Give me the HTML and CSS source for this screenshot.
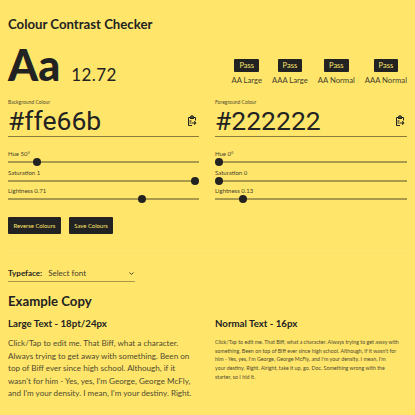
FILE: index.html
```html
<!DOCTYPE html>
<html lang="en">
<head>
  <meta charset="UTF-8"/>
  <meta name="viewport" content="width=device-width,initial-scale=1.0"/>
  <title>Colour Contrast Checker</title>
  <link rel="stylesheet" href="styles.css">
</head>
<body>

<h1>Colour Contrast Checker</h1>

<div class="columns results">
  <div class="score">
    <span class="sample">Aa</span>
    <span class="ratio">12.72</span>
  </div>
  <div class="grades">
    <div class="grade"><span class="badge">Pass</span><span class="grade-label">AA Large</span></div>
    <div class="grade"><span class="badge">Pass</span><span class="grade-label">AAA Large</span></div>
    <div class="grade"><span class="badge">Pass</span><span class="grade-label">AA Normal</span></div>
    <div class="grade"><span class="badge">Pass</span><span class="grade-label">AAA Normal</span></div>
  </div>
</div>

<div class="columns pickers">
  <div class="picker">
    <label class="field-label">Background Colour</label>
    <div class="hex-row">
      <span class="hex">#ffe66b</span>
      <svg class="paste" viewBox="0 0 24 24"><path d="M8 4H5.500A1.500 1.500 0 0 0 4 5.500v15A1.500 1.500 0 0 0 5.500 22H12v-2H6V6h2v2h8V6h2v5h2V5.500A1.500 1.500 0 0 0 18.500 4H16a4 3.500 0 0 0-8 0zm4-1a1 1 0 1 1 0 2 1 1 0 0 1 0-2z"/><path d="M17 12l-1.400 1.400 1.600 1.600H12v2h5.200l-1.600 1.600L17 20l4-4z"/><path d="M7 10h4v8H7z" opacity=".55"/></svg>
    </div>
    <label class="slider-label">Hue 50°</label>
    <input type="range" min="0" max="360" value="50">
    <label class="slider-label">Saturation 1</label>
    <input type="range" min="0" max="1" step="0.01" value="1">
    <label class="slider-label">Lightness 0.71</label>
    <input type="range" min="0" max="1" step="0.01" value="0.71">
    <div class="actions">
      <button>Reverse Colours</button>
      <button>Save Colours</button>
    </div>
  </div>
  <div class="picker">
    <label class="field-label">Foreground Colour</label>
    <div class="hex-row">
      <span class="hex">#222222</span>
      <svg class="paste" viewBox="0 0 24 24"><path d="M8 4H5.500A1.500 1.500 0 0 0 4 5.500v15A1.500 1.500 0 0 0 5.500 22H12v-2H6V6h2v2h8V6h2v5h2V5.500A1.500 1.500 0 0 0 18.500 4H16a4 3.500 0 0 0-8 0zm4-1a1 1 0 1 1 0 2 1 1 0 0 1 0-2z"/><path d="M17 12l-1.400 1.400 1.600 1.600H12v2h5.200l-1.600 1.600L17 20l4-4z"/><path d="M7 10h4v8H7z" opacity=".55"/></svg>
    </div>
    <label class="slider-label">Hue 0°</label>
    <input type="range" min="0" max="360" value="0">
    <label class="slider-label">Saturation 0</label>
    <input type="range" min="0" max="1" step="0.01" value="0">
    <label class="slider-label">Lightness 0.13</label>
    <input type="range" min="0" max="1" step="0.01" value="0.13">
  </div>
</div>

<div class="typeface">
  <strong>Typeface:</strong>
  <span class="select-font">Select font
    <svg class="chevron" viewBox="0 0 10 6"><path d="M1 1l4 4 4-4"/></svg>
  </span>
</div>

<h2>Example Copy</h2>

<div class="columns copy">
  <div>
    <h3>Large Text - 18pt/24px</h3>
    <p class="large">Click/Tap to edit me. That Biff, what a character. Always trying to get away with something. Been on top of Biff ever since high school. Although, if it wasn't for him - Yes, yes, I'm George, George McFly, and I'm your density. I mean, I'm your destiny. Right.</p>
  </div>
  <div>
    <h3>Normal Text - 16px</h3>
    <p class="normal">Click/Tap to edit me. That Biff, what a character. Always trying to get away with something. Been on top of Biff ever since high school. Although, if it wasn't for him - Yes, yes, I'm George, George McFly, and I'm your density. I mean, I'm<br>your destiny. Right. Alright, take it up, go. Doc. Something wrong with the<br>starter, so I hid it.</p>
  </div>
</div>

</body>
</html>
```

FILE: styles.css
```css
html { overflow: hidden; }
body {
  font-family: Lato, "Open Sans", sans-serif;
  background: #ffe66b;
  color: #222222;
  margin: 0;
  padding: 0 8px;
  height: 415px;
  overflow: hidden;
}
h1 {
  font-size: 13.200px;
  font-weight: 700;
  line-height: 18px;
  margin: 0;
  padding-top: 15px;
}
.columns {
  display: grid;
  grid-template-columns: 191px 192px;
  gap: 16px;
}
.results { height: 49px; margin-top: 11px; }
.score { display: flex; align-items: baseline; }
.sample { font-size: 43px; font-weight: 900; line-height: 41px; }
.ratio { font-size: 17px; margin-left: 11px; letter-spacing: 0.4px; }
.grades {
  display: flex;
  justify-content: flex-end;
  gap: 10px;
  padding-top: 15px;
}
.grade { display: flex; flex-direction: column; align-items: center; gap: 2px; }
.badge {
  background: #222222;
  color: #ffe66b;
  font-size: 7.500px;
  line-height: 13px;
  padding: 0 5px;
  border-radius: 1px;
}
.grade-label { font-size: 7.700px; line-height: 12px; opacity: 0.85; }
.pickers {
  height: 157px;
  border-bottom: 1px solid #ffe875;
}
.field-label { display: block; font-size: 5px; line-height: 8px; margin-top: 5px; opacity: 0.8; }
.hex-row {
  display: flex;
  justify-content: space-between;
  align-items: center;
  border-bottom: 1.500px solid #8a7c3c;
  height: 30px;
  margin-bottom: 13px;
}
.hex { font-family: Roboto, sans-serif; font-size: 26.500px; line-height: 28px; }
.paste { width: 12px; height: 12px; fill: #222222; margin-right: 1px; }
.slider-label { display: block; font-size: 6px; line-height: 8px; margin-top: 2.500px; opacity: 0.85; }
input[type="range"] {
  -webkit-appearance: none;
  appearance: none;
  display: block;
  width: 100%;
  height: 8px;
  margin: 0;
  background: transparent;
}
input[type="range"]::-webkit-slider-runnable-track {
  height: 2px;
  background: #a89a4a;
}
input[type="range"]::-webkit-slider-thumb {
  -webkit-appearance: none;
  width: 8px;
  height: 8px;
  margin-top: -3px;
  border-radius: 50%;
  background: #222222;
}
.actions { display: flex; gap: 8px; margin-top: 14px; }
button {
  background: #222222;
  color: #ffe66b;
  border: none;
  border-radius: 1px;
  font-family: inherit;
  font-size: 5.900px;
  height: 17px;
  padding: 0 5.500px;
}
.typeface {
  display: flex;
  align-items: center;
  width: 127px;
  height: 16px;
  margin-top: 14px;
  border-bottom: 1px solid #a89a4a;
  font-size: 8px;
}
.typeface strong { font-weight: 700; margin-right: 6px; }
.select-font {
  flex: 1;
  display: flex;
  justify-content: space-between;
  align-items: center;
  opacity: 0.85;
}
.chevron { width: 5px; height: 3px; margin-right: 1px; fill: none; stroke: #222222; stroke-width: 2; }
h2 { font-size: 13.200px; font-weight: 700; line-height: 18px; margin: 10px 0 0; }
.copy { margin-top: 6px; }
h3 { font-size: 9.700px; font-weight: 700; line-height: 14px; margin: 0; }
p { margin: 0; opacity: 0.8; }
.large { font-size: 8.100px; line-height: 12.500px; margin-top: 7px; padding-right: 6px; }
.normal { font-size: 5.300px; line-height: 8.700px; margin-top: 8px; padding-right: 3px; }
```
